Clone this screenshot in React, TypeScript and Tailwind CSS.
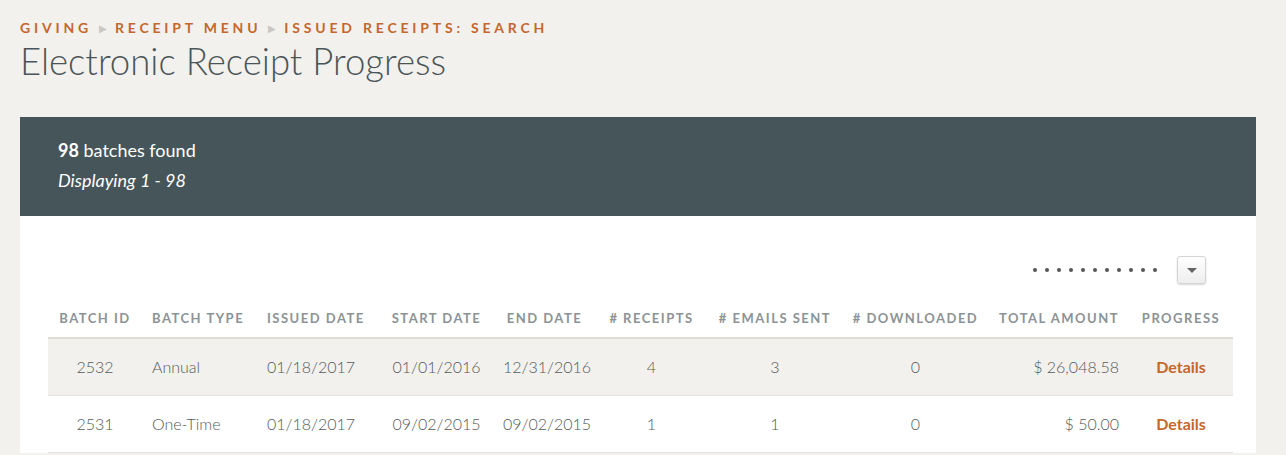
import * as React from 'react';

const font = { fontFamily: 'Lato, "Liberation Sans", sans-serif' };

type Row = {
  id: string;
  type: string;
  issued: string;
  start: string;
  end: string;
  receipts: number;
  emails: number;
  downloaded: number;
  total: string;
};

const rows: Row[] = [
  { id: '2532', type: 'Annual', issued: '01/18/2017', start: '01/01/2016', end: '12/31/2016', receipts: 4, emails: 3, downloaded: 0, total: '$ 26,048.58' },
  { id: '2531', type: 'One-Time', issued: '01/18/2017', start: '09/02/2015', end: '09/02/2015', receipts: 1, emails: 1, downloaded: 0, total: '$ 50.00' },
];

const Crumb = ({ children }: { children: React.ReactNode }) => (
  <span className="text-[14px] font-bold uppercase tracking-[3.8px] text-[#c4672d]">{children}</span>
);

const Arrow = () => <span className="ml-[7px] mr-[8px] text-[10px] text-[#c9c8c4]">&#9654;</span>;

const App = () => {
  return (
    <div className="min-h-[455px] bg-[#f2f1ee] pl-5 pr-[30px] pt-[19px]" style={font}>
      <nav className="flex items-center leading-[18px]">
        <Crumb>Giving</Crumb>
        <Arrow />
        <Crumb>Receipt Menu</Crumb>
        <Arrow />
        <Crumb>Issued Receipts: Search</Crumb>
      </nav>
      <h1 className="mt-[2px] text-[36.6px] font-light leading-[44px] text-[#4b5559]">Electronic Receipt Progress</h1>

      <div className="mt-[34px] bg-white">
        <div className="flex h-[99px] flex-col justify-center bg-[#45555a] pb-[4px] pl-[38px] text-white">
          <p className="text-[18px] leading-[30px]">
            <span className="font-bold">98</span> batches found
          </p>
          <p className="text-[18px] italic leading-[30px]">Displaying 1 - 98</p>
        </div>

        <div className="flex items-center justify-end pr-[50px] pt-[40px]">
          <div className="flex gap-[8px]">
            {Array.from({ length: 11 }).map((_, i) => (
              <span key={i} className="h-[4px] w-[4px] rounded-full bg-[#555]" />
            ))}
          </div>
          <button className="ml-[20px] flex h-[28px] w-[29px] items-center justify-center rounded-[3px] border border-[#d4d4d4] bg-gradient-to-b from-white to-[#eeeeee] shadow-[0_1px_2px_rgba(0,0,0,0.15)]">
            <span className="h-0 w-0 border-x-[5px] border-t-[5px] border-x-transparent border-t-[#666]" />
          </button>
        </div>

        <div className="ml-[28px] mr-[23px] mt-[16px]">
          <table className="w-full table-fixed border-collapse">
            <colgroup>
              <col className="w-[94px]" />
              <col className="w-[115px]" />
              <col className="w-[123px]" />
              <col className="w-[113px]" />
              <col className="w-[103px]" />
              <col className="w-[111px]" />
              <col className="w-[136px]" />
              <col className="w-[145px]" />
              <col className="w-[141px]" />
              <col className="w-[104px]" />
            </colgroup>
            <thead>
              <tr className="h-[38px] whitespace-nowrap border-b-2 border-[#dddcd5] text-[13px] font-bold uppercase tracking-[1.5px] text-[#8c9396]">
                <th className="px-[10px] text-center font-bold">Batch ID</th>
                <th className="px-[10px] text-left font-bold">Batch Type</th>
                <th className="px-[10px] text-left font-bold">Issued Date</th>
                <th className="px-[10px] text-center font-bold">Start Date</th>
                <th className="px-[10px] text-center font-bold">End Date</th>
                <th className="px-[10px] text-center font-bold"># Receipts</th>
                <th className="px-[10px] text-center font-bold"># Emails Sent</th>
                <th className="px-[6px] text-center font-bold"># Downloaded</th>
                <th className="px-[10px] text-right font-bold">Total Amount</th>
                <th className="px-[10px] text-center font-bold">Progress</th>
              </tr>
            </thead>
            <tbody>
              {rows.map((r, i) => (
                <tr
                  key={r.id}
                  className={`h-[57px] border-b border-[#e2e1da] text-[16px] font-light text-[#555a5c] ${i % 2 === 0 ? 'bg-[#f2f1ed]' : 'bg-white'}`}
                >
                  <td className="px-[10px] text-center">{r.id}</td>
                  <td className="px-[10px] text-left">{r.type}</td>
                  <td className="px-[10px] text-left">{r.issued}</td>
                  <td className="px-[10px] text-center">{r.start}</td>
                  <td className="px-[10px] text-center">{r.end}</td>
                  <td className="px-[10px] text-center">{r.receipts}</td>
                  <td className="px-[10px] text-center">{r.emails}</td>
                  <td className="px-[10px] text-center">{r.downloaded}</td>
                  <td className="px-[10px] text-right">{r.total}</td>
                  <td className="px-[10px] text-center">
                    <a href="#" className="font-bold text-[#c4672d]">Details</a>
                  </td>
                </tr>
              ))}
            </tbody>
          </table>
        </div>
      </div>
    </div>
  );
};

export default App;
